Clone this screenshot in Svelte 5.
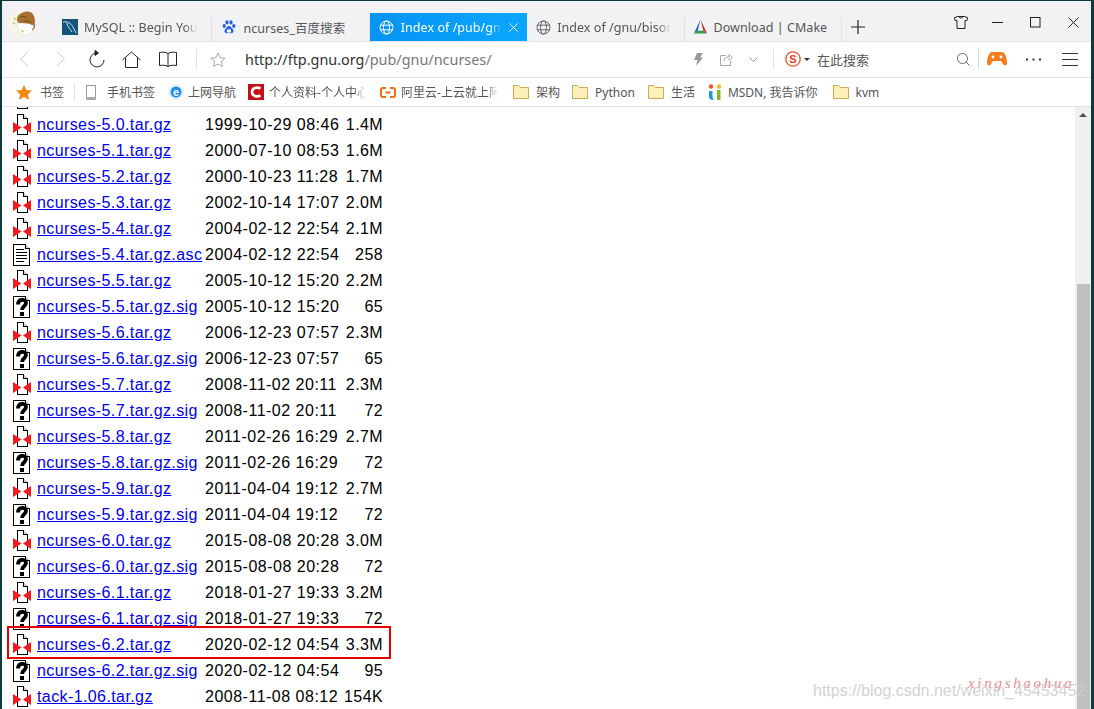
<script>
  const tabs = [
    { icon: 'mysql', title: 'MySQL :: Begin Your First Steps' },
    { icon: 'baidu', title: 'ncurses_百度搜索', fits: true },
    { icon: 'globe', title: 'Index of /pub/gnu/ncurses', active: true },
    { icon: 'globe', title: 'Index of /gnu/bison' },
    { icon: 'cmake', title: 'Download | CMake', fits: true }
  ];

  const files = [
    ['ncurses-4.2.tar.gz', '1998-02-12 11:00', '1.4M', 'zip'],
    ['ncurses-5.0.tar.gz', '1999-10-29 08:46', '1.4M', 'zip'],
    ['ncurses-5.1.tar.gz', '2000-07-10 08:53', '1.6M', 'zip'],
    ['ncurses-5.2.tar.gz', '2000-10-23 11:28', '1.7M', 'zip'],
    ['ncurses-5.3.tar.gz', '2002-10-14 17:07', '2.0M', 'zip'],
    ['ncurses-5.4.tar.gz', '2004-02-12 22:54', '2.1M', 'zip'],
    ['ncurses-5.4.tar.gz.asc', '2004-02-12 22:54', '258', 'txt'],
    ['ncurses-5.5.tar.gz', '2005-10-12 15:20', '2.2M', 'zip'],
    ['ncurses-5.5.tar.gz.sig', '2005-10-12 15:20', '65', 'sig'],
    ['ncurses-5.6.tar.gz', '2006-12-23 07:57', '2.3M', 'zip'],
    ['ncurses-5.6.tar.gz.sig', '2006-12-23 07:57', '65', 'sig'],
    ['ncurses-5.7.tar.gz', '2008-11-02 20:11', '2.3M', 'zip'],
    ['ncurses-5.7.tar.gz.sig', '2008-11-02 20:11', '72', 'sig'],
    ['ncurses-5.8.tar.gz', '2011-02-26 16:29', '2.7M', 'zip'],
    ['ncurses-5.8.tar.gz.sig', '2011-02-26 16:29', '72', 'sig'],
    ['ncurses-5.9.tar.gz', '2011-04-04 19:12', '2.7M', 'zip'],
    ['ncurses-5.9.tar.gz.sig', '2011-04-04 19:12', '72', 'sig'],
    ['ncurses-6.0.tar.gz', '2015-08-08 20:28', '3.0M', 'zip'],
    ['ncurses-6.0.tar.gz.sig', '2015-08-08 20:28', '72', 'sig'],
    ['ncurses-6.1.tar.gz', '2018-01-27 19:33', '3.2M', 'zip'],
    ['ncurses-6.1.tar.gz.sig', '2018-01-27 19:33', '72', 'sig'],
    ['ncurses-6.2.tar.gz', '2020-02-12 04:54', '3.3M', 'zip'],
    ['ncurses-6.2.tar.gz.sig', '2020-02-12 04:54', '95', 'sig'],
    ['tack-1.06.tar.gz', '2008-11-08 08:12', '154K', 'zip']
  ];
</script>

{#snippet tabIcon(kind, active)}
  {#if kind === 'mysql'}
    <svg width="16" height="16" viewBox="0 0 16 16">
      <rect width="16" height="16" fill="#14547c" />
      <path d="M1 3c4-1 8 1 10 5l3 6M5 4c0 4 3 5 5 9" fill="none" stroke="#cfe3ee" stroke-width="1" />
    </svg>
  {:else if kind === 'baidu'}
    <svg width="16" height="16" viewBox="0 0 16 16">
      <rect width="16" height="16" fill="#eef2fb" />
      <g fill="#2b5fe0">
        <ellipse cx="3.2" cy="7" rx="1.6" ry="2" />
        <ellipse cx="6" cy="3.4" rx="1.6" ry="2.1" />
        <ellipse cx="10" cy="3.4" rx="1.6" ry="2.1" />
        <ellipse cx="12.8" cy="7" rx="1.6" ry="2" />
        <path d="M8 7c2 0 2.500 2 4 3.500 1.500 2-.5 4-2 3.700-1.300-.3-2.700-.3-4 0-1.500.3-3.500-1.700-2-3.700C5.500 9 6 7 8 7z" />
      </g>
      <rect x="6" y="10.500" width="4" height="3" fill="#fff" />
    </svg>
  {:else if kind === 'globe'}
    <svg width="15" height="15" viewBox="0 0 15 15" fill="none" stroke={active ? '#fff' : '#666'} stroke-width="1">
      <circle cx="7.500" cy="7.500" r="6.500" />
      <ellipse cx="7.500" cy="7.500" rx="3" ry="6.500" />
      <path d="M1 5.200h13M1 9.800h13" />
    </svg>
  {:else}
    <svg class="cmake" width="15" height="16" viewBox="0 0 16 16">
      <path d="M8 0L5 12l-4 3z" fill="#2a5fb4" />
      <path d="M8 0l3 12 4 3z" fill="#d62c2c" />
      <path d="M1 15l4-3h6l4 3z" fill="#2f9e44" />
    </svg>
  {/if}
{/snippet}

{#snippet folder()}
  <svg class="fold" width="16" height="14" viewBox="0 0 16 14">
    <path d="M.5 13.500V.5h5l2 2h8v11z" fill="#fdf0bb" stroke="#cfa955" />
  </svg>
{/snippet}

{#snippet fileIcon(kind)}
  <svg class="file" width="20" height="22" viewBox="0 0 20 22" shape-rendering="crispEdges">
    {#if kind === 'zip'}
      <path d="M4.500.5h6l4 4v16h-10z" fill="#fff" stroke="#000" />
      <path d="M10.500.5v4h4" fill="#ccc" stroke="#000" />
      <path d="M0 8l8.500 5.500L0 19zM18 8l-8 5.500 8 5.500z" fill="#f4191c" shape-rendering="auto" />
    {:else}
      <path d="M.5.5h12l4 4v17H.5z" fill="#fff" stroke="#000" />
      <path d="M12.500.5v4h4" fill="#ccc" stroke="#000" />
      {#if kind === 'txt'}
        <path d="M3 5.500h8M3 8.500h11M3 11.500h11M3 14.500h11M3 17.500h8" stroke="#000" stroke-width="1.500" fill="none" />
      {:else}
        <path d="M5 8.500c0-6 8-6 8-1.500 0 3.500-4 3-4 7" fill="none" stroke="#000" stroke-width="3.800" shape-rendering="auto" />
        <rect x="7" y="15.500" width="4" height="4" fill="#000" />
      {/if}
    {/if}
  </svg>
{/snippet}

<div class="window">
  <header class="tabbar">
    <div class="logo">
      <svg width="28" height="28" viewBox="0 0 28 28">
        <circle cx="14" cy="14" r="13.500" fill="#f8f4e6" />
        <path d="M9 13h17l-2 9c-1 4-12 4-13 0z" fill="#fff" stroke="#cfd0c4" stroke-width=".5" />
        <path d="M9 9c0-3 2-5 5-6 3-2 7-2 10 0 2 2 3 5 3 9 0 2-1 3-3 3-4-2-9-2-13-2-1 0-2-2-2-4z" fill="#a8702f" />
        <path d="M13 7c2-1 4-1 6 1M16 11c2 0 5 0 7 1M26 14c1 3 0 5-2 6" stroke="#6f4519" fill="none" />
        <path d="M6 8l2 2M5 13l2 1M13 20l3 2" stroke="#b9cf72" stroke-width="1.500" />
      </svg>
    </div>
    {#each tabs as tab}
      <div class="tab" class:active={tab.active}>
        {@render tabIcon(tab.icon, tab.active)}
        <span class="tab-title" class:fits={tab.fits}>{tab.title}</span>
        {#if tab.active}
          <svg class="tab-close" width="9" height="9" viewBox="0 0 9 9"><path d="M.5.5l8 8M8.500.5l-8 8" stroke="#fff" /></svg>
        {/if}
      </div>
    {/each}
    <svg class="plus" width="14" height="14" viewBox="0 0 14 14"><path d="M7 0v14M0 7h14" stroke="#222" stroke-width="1.200" /></svg>
    <div class="winctl">
      <svg class="shirt" width="14" height="13" viewBox="0 0 14 13" fill="none" stroke="#222"><path d="M4 .5h6l3.500 1-.5 3h-2v8H3v-8H1l-.5-3zM5 .5c0 2 4 2 4 0" /></svg>
      <svg width="11" height="11" viewBox="0 0 11 11"><path d="M0 5.500h11" stroke="#222" /></svg>
      <svg width="11" height="11" viewBox="0 0 11 11" fill="none"><rect x=".5" y=".5" width="9.500" height="9.500" stroke="#222" /></svg>
      <svg width="11" height="11" viewBox="0 0 11 11"><path d="M.5.500l10 10M10.500.5l-10 10" stroke="#222" /></svg>
    </div>
  </header>

  <nav class="toolbar">
    <div class="nav-icons">
      <svg width="10" height="16" viewBox="0 0 10 16"><path d="M9 1L1.500 8 9 15" fill="none" stroke="#ccc" /></svg>
      <svg class="fwd" width="10" height="16" viewBox="0 0 10 16"><path d="M1 1l7.500 7L1 15" fill="none" stroke="#ccc" /></svg>
      <svg class="reload" width="17" height="18" viewBox="0 0 17 18" fill="none" stroke="#222">
        <path d="M8 3a7 7 0 1 0 8 7" />
        <path d="M7 .5L10.500 3 7 5.500z" fill="#222" />
      </svg>
      <svg class="home" width="19" height="17" viewBox="0 0 19 17" fill="none" stroke="#222"><path d="M.5 9L9.500 1l9 8M3.500 7v9.500h12V7" /></svg>
      <svg class="book" width="18" height="17" viewBox="0 0 18 17" fill="none" stroke="#222"><path d="M9 2.500C7 1 3 1 .5 1.500v13c3-.5 6-.5 8.500 1 2.500-1.500 5.500-1.500 8.500-1v-13C15 1 11 1 9 2.500zM9 2.500V16" /></svg>
    </div>
    <svg class="star" width="16" height="15" viewBox="0 0 16 15"><path d="M8 1l2.100 4.700 5 .5-3.800 3.300 1.100 5L8 12l-4.400 2.500 1.100-5L.9 6.200l5-.5z" fill="none" stroke="#aaa" /></svg>
    <div class="url"><span class="host">http://ftp.gnu.org</span>/pub/gnu/ncurses/</div>
    <div class="page-actions">
      <svg width="9" height="13" viewBox="0 0 9 13"><path d="M3 0h6L6 4.500h3L2 13l1.500-6H0z" fill="#999" /></svg>
      <svg class="share" width="13" height="13" viewBox="0 0 13 13" fill="none" stroke="#aaa"><path d="M6 2.500H.5v10h10V8M4 8c0-3 2-4 5-4V1.500l3.500 3-3.500 3V5.500" /></svg>
      <svg class="chev" width="9" height="5" viewBox="0 0 9 5"><path d="M.5.500l4 4 4-4" fill="none" stroke="#999" /></svg>
    </div>
    <div class="search">
      <svg width="16" height="16" viewBox="0 0 16 16">
        <circle cx="8" cy="8" r="7.200" fill="#fff" stroke="#ee4b2b" stroke-width="1.300" />
        <text x="8" y="12" text-anchor="middle" class="sogou">S</text>
      </svg>
      <span class="caret"></span>
      <span class="search-text">在此搜索</span>
      <svg class="glass" width="13" height="13" viewBox="0 0 13 13" fill="none" stroke="#666"><circle cx="5.500" cy="5.500" r="5" /><path d="M9 9l3.500 3.500" /></svg>
    </div>
    <div class="tools">
      <svg width="20" height="14" viewBox="0 0 20 14">
        <path d="M5 0h10c3 0 5 6 5 11 0 3-3 3-4 1l-2-3H6l-2 3c-1 2-4 2-4-1C0 6 2 0 5 0z" fill="#f47b20" />
        <circle cx="6" cy="5" r="1.400" fill="#fff" /><circle cx="14" cy="5" r="1.400" fill="#fff" />
      </svg>
      <svg class="dots" width="15" height="3" viewBox="0 0 15 3" fill="#333"><rect y=".5" width="2" height="2" /><rect x="6.500" y=".5" width="2" height="2" /><rect x="13" y=".5" width="2" height="2" /></svg>
      <svg class="menu" width="16" height="13" viewBox="0 0 16 13"><path d="M0 .5h16M0 6.500h16M0 12.500h16" stroke="#333" /></svg>
    </div>
  </nav>

  <div class="bookmarks">
    <div class="bm first">
      <svg width="16" height="15" viewBox="0 0 16 15"><path d="M8 0l2.400 5 5.600.6-4.100 3.700 1.100 5.500L8 12l-5 2.800 1.100-5.500L0 5.600 5.600 5z" fill="#f48a16" /></svg>
      <span>书签</span>
    </div>
    <div class="bm phone">
      <svg width="10" height="15" viewBox="0 0 10 15"><rect x=".5" y=".5" width="9" height="14" fill="none" stroke="#999" /><rect x="0" y="12" width="10" height="3" fill="#aaa" /></svg>
      <span>手机书签</span>
    </div>
    <div class="bm w-nav">
      <svg width="16" height="16" viewBox="0 0 16 16"><circle cx="8" cy="8" r="8" fill="#e8f1fb" /><circle cx="8" cy="8" r="5.500" fill="#1b8fe8" /><text x="8" y="11.500" text-anchor="middle" class="e">e</text></svg>
      <span>上网导航</span>
    </div>
    <div class="bm w-profile">
      <svg width="16" height="16" viewBox="0 0 16 16"><rect width="16" height="16" fill="#c40f14" /><path d="M12.500 4.500C9 2.500 4 4 4 8s5 5.500 8.500 3.500" fill="none" stroke="#fff" stroke-width="2.600" /></svg>
      <span class="fade">个人资料-个人中心</span>
    </div>
    <div class="bm w-ali">
      <svg width="16" height="11" viewBox="0 0 16 11" fill="none" stroke="#f26a14" stroke-width="2"><path d="M6 1H3C1.800 1 1 1.800 1 3v5c0 1.200.8 2 2 2h3M10 1h3c1.200 0 2 .8 2 2v5c0 1.200-.8 2-2 2h-3M5.500 5.500h5" /></svg>
      <span class="fade">阿里云-上云就上阿里云</span>
    </div>
    <div class="bm w-jg">{@render folder()}<span>架构</span></div>
    <div class="bm">{@render folder()}<span>Python</span></div>
    <div class="bm">{@render folder()}<span>生活</span></div>
    <div class="bm w-msdn">
      <svg width="14" height="16" viewBox="0 0 14 16"><circle cx="3" cy="2.500" r="2.200" fill="#f05a28" /><circle cx="11" cy="2.500" r="2.200" fill="#f5b81f" /><path d="M1 7h3.500v6c0 1 .5 1.500 1 1.500V16C3 16 1 15 1 13z" fill="#1a9bd7" /><path d="M9 6h3.500v10H9z" fill="#7cbb2f" /></svg>
      <span>MSDN, 我告诉你</span>
    </div>
    <div class="bm">{@render folder()}<span>kvm</span></div>
  </div>

  <main class="page">
    <table>
      <tbody>
        {#each files as [name, date, size, kind]}
          <tr>
            <td class="ico">{@render fileIcon(kind)}</td>
            <td class="name"><a href="#{name}">{name}</a></td>
            <td class="date">{date}</td>
            <td class="size">{size}</td>
          </tr>
        {/each}
      </tbody>
    </table>
    <div class="highlight"></div>
    <div class="scrollbar">
      <div class="arrow"></div>
      <div class="thumb"></div>
    </div>
    <div class="mark-red">xingshaohua</div>
    <div class="mark-url">https://blog.csdn.net/weixin_45453452</div>
  </main>
</div>

<style>
  :global(body) {
    margin: 0;
    background: #0b3a3c;
  }

  .window {
    position: relative;
    height: 708px;
    margin: 1px 3px 0 2px;
    display: flex;
    flex-direction: column;
    overflow: hidden;
    background: #fff;
    font-family: "Noto Sans", "Noto Sans CJK SC", sans-serif;
    color: #555;
    font-size: 13px;
  }

  .tabbar {
    height: 40px;
    flex: none;
    display: flex;
    align-items: flex-end;
    background: #f2f2f5;
    border-bottom: 1px solid #e4e4e6;
    box-sizing: content-box;
    margin-bottom: -1px;
    position: relative;
  }

  .logo {
    flex: none;
    align-self: flex-start;
    width: 47px;
    height: 28px;
    padding: 9px 0 0 6px;
  }

  .tab {
    flex: none;
    width: 157.400px;
    height: 28px;
    box-sizing: border-box;
    display: flex;
    align-items: center;
    gap: 6px;
    padding: 0 14px 0 9px;
    position: relative;
    font-size: 12.500px;
    color: #555;
    letter-spacing: .05px;
  }

  .logo + .tab {
    padding-left: 7px;
  }

  .cmake {
    margin-left: -1px;
  }

  .tab:not(.active)::after {
    content: "";
    position: absolute;
    right: 0;
    top: 4px;
    bottom: 0;
    border-right: 1px solid #e2e2e5;
  }

  .tab.active {
    background: linear-gradient(90deg, #0494f4, #0ca6ff);
    color: #fff;
    gap: 7px;
    padding-right: 9px;
  }

  .tab-title {
    flex: 1;
    min-width: 0;
    white-space: nowrap;
    overflow: hidden;
    mask-image: linear-gradient(90deg, #000 88%, transparent);
  }

  .tab-title.fits {
    mask-image: none;
  }

  .tab-close {
    flex: none;
  }

  .plus {
    margin: 0 0 7px 9px;
  }

  .winctl {
    margin-left: auto;
    align-self: flex-start;
    display: flex;
    align-items: center;
    gap: 27px;
    padding: 15px 12px 0 0;
  }

  .shirt {
    margin-right: -3px;
  }

  .toolbar {
    height: 36px;
    flex: none;
    display: flex;
    align-items: center;
    background: #fff;
    border-bottom: 1px solid #e2e2e2;
  }

  .nav-icons {
    display: flex;
    align-items: center;
    padding-left: 17px;
    padding-right: 19px;
    height: 20px;
    border-right: 1px solid #e3e3e3;
  }

  .fwd {
    margin-left: 27px;
  }

  .reload {
    margin-left: 22px;
  }

  .home {
    margin-left: 17px;
  }

  .book {
    margin-left: 18px;
  }

  .star {
    margin-left: 13px;
  }

  .url {
    margin-left: 19px;
    width: 449px;
    font-size: 14.400px;
    color: #777;
    white-space: nowrap;
  }

  .host {
    color: #333;
  }

  .page-actions {
    display: flex;
    align-items: center;
    width: 79px;
    height: 20px;
    border-right: 1px solid #e3e3e3;
  }

  .share {
    margin-left: 17px;
  }

  .chev {
    margin-left: 16px;
  }

  .search {
    display: flex;
    align-items: center;
    width: 205px;
    height: 20px;
    padding-left: 11px;
    box-sizing: border-box;
    border-right: 1px solid #d8d8d8;
  }

  .sogou {
    font: bold 11px "Liberation Sans", sans-serif;
    fill: #ee3b1f;
  }

  .caret {
    margin-left: 3px;
    border-left: 3px solid transparent;
    border-right: 3px solid transparent;
    border-top: 3px solid #333;
  }

  .search-text {
    margin-left: 7px;
    font-size: 13px;
  }

  .glass {
    margin-left: auto;
    margin-right: 8px;
  }

  .tools {
    display: flex;
    align-items: center;
    padding-left: 8px;
  }

  .dots {
    margin-left: 19px;
  }

  .menu {
    margin-left: 21px;
  }

  .bookmarks {
    height: 28px;
    flex: none;
    display: flex;
    align-items: center;
    background: #fff;
    border-bottom: 1px solid #e2e2e2;
    padding-left: 14px;
    font-size: 12px;
    white-space: nowrap;
  }

  .bm {
    display: flex;
    align-items: center;
    gap: 7px;
    margin-right: 13px;
  }

  .bm.first {
    gap: 8px;
    padding-right: 10px;
    margin-right: 11px;
    border-right: 1px solid #e3e3e3;
    height: 18px;
  }

  .bm.phone {
    gap: 11px;
  }

  .bm.w-nav {
    gap: 4px;
    margin-right: 12px;
  }

  .bm.w-profile {
    gap: 5px;
    margin-right: 14px;
  }

  .bm.w-ali {
    gap: 5px;
    margin-right: 15px;
  }

  .bm.w-jg {
    margin-right: 12px;
  }

  .bm.w-msdn {
    gap: 6px;
    margin-right: 15px;
  }

  .fade {
    width: 97px;
    overflow: hidden;
    mask-image: linear-gradient(90deg, #000 88%, transparent);
  }

  .e {
    font: bold 11px "Liberation Sans", sans-serif;
    fill: #fff;
  }

  .page {
    position: relative;
    flex: 1;
    min-height: 0;
    overflow: hidden;
    background: #fff;
    font-family: "Liberation Sans", Arial, sans-serif;
    font-size: 16px;
    color: #000;
  }

  table {
    border-collapse: collapse;
    margin: -21px 0 0 11px;
  }

  td {
    height: 26px;
    padding: 0;
    white-space: nowrap;
    line-height: 18px;
  }

  .ico {
    width: 24px;
    vertical-align: middle;
  }

  .file {
    display: block;
    margin-top: -1px;
  }

  .name {
    width: 168px;
    letter-spacing: .4px;
  }

  a {
    color: #00e;
  }

  .date {
    width: 138px;
    letter-spacing: .5px;
  }

  .size {
    width: 40px;
    text-align: right;
    letter-spacing: .4px;
  }

  .highlight {
    position: absolute;
    left: 5px;
    top: 519px;
    width: 380px;
    height: 29px;
    border: 2px solid #e60000;
  }

  .scrollbar {
    position: absolute;
    top: 0;
    right: 0;
    bottom: 0;
    width: 16px;
    background: #f0f0f0;
    box-sizing: border-box;
    padding: 0 1px 0 2px;
  }

  .arrow {
    width: 0;
    margin: 6px 0 0 2px;
    border-left: 4px solid transparent;
    border-right: 4px solid transparent;
    border-bottom: 4px solid #505050;
  }

  .thumb {
    margin-top: 167px;
    height: 500px;
    background: #c0c0c0;
  }

  .mark-red {
    position: absolute;
    left: 966px;
    top: 568px;
    font: italic 15px "Liberation Serif", serif;
    letter-spacing: 2.700px;
    color: #e98b90;
  }

  .mark-url {
    position: absolute;
    left: 811px;
    top: 575px;
    font: 16px "Liberation Sans", sans-serif;
    color: rgba(205, 205, 205, .9);
    white-space: nowrap;
  }
</style>
